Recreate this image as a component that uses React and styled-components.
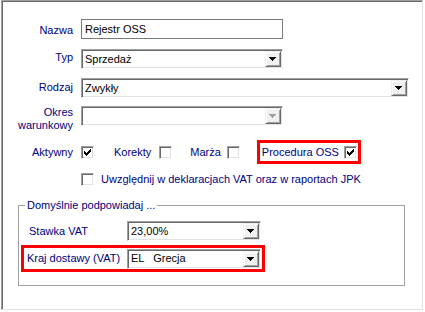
import React from "react";
import styled, { createGlobalStyle } from "styled-components";

const Global = createGlobalStyle`
  body {
    margin: 0;
    background: #fff;
    font-family: "Liberation Sans", Arial, sans-serif;
    font-size: 11px;
  }
`;

const Panel = styled.div`
  margin-left: 1px;
  width: 422px;
  height: 310px;
  box-sizing: border-box;
  background: #fff;
  border-top: 1px solid #a0a0a0;
  border-left: 1px solid #a0a0a0;
  border-right: 1px solid #e3e3e3;
  border-bottom: 1px solid #e3e3e3;
  box-shadow: inset 1px 1px 0 #696969;
  padding: 1px 0 0 1px;
`;

const Row = styled.div`
  display: flex;
  align-items: ${(p) => p.$align || "flex-start"};
  gap: ${(p) => (p.$gap ?? 8)}px;
  margin-top: ${(p) => p.$mt || 0}px;
  height: ${(p) => (p.$h ? `${p.$h}px` : "auto")};
  margin-left: ${(p) => p.$ml || 0}px;
`;

const Label = styled.div`
  width: ${(p) => p.$w || 70}px;
  flex: none;
  text-align: ${(p) => (p.$left ? "left" : "right")};
  color: #000080;
  line-height: 13px;
  padding-top: ${(p) => p.$dy || 0}px;
`;

const Text = styled.span`
  color: #000080;
  line-height: 13px;
  margin-left: ${(p) => p.$ml || 0}px;
  white-space: nowrap;
`;

const TextField = styled.div`
  width: ${(p) => p.$w}px;
  height: 20px;
  box-sizing: border-box;
  border: 1px solid #7a7a7a;
  background: #fff;
  display: flex;
  align-items: center;
  padding-left: 3px;
  color: #000;
  line-height: 13px;
`;

const ComboBox = styled.div`
  width: ${(p) => p.$w}px;
  height: 20px;
  box-sizing: border-box;
  background: #fff;
  border: 1px solid;
  border-color: #a0a0a0 #fff #fff #a0a0a0;
  box-shadow: inset 1px 1px 0 #696969, inset -1px -1px 0 #e3e3e3;
  padding: 1px;
  display: flex;
  align-items: center;
`;

const Value = styled.span`
  flex: 1;
  padding-left: 2px;
  color: #000;
  line-height: 13px;
  white-space: pre;
`;

const DropButton = styled.div`
  width: 16px;
  height: 16px;
  box-sizing: border-box;
  background: #f0f0f0;
  border: 1px solid;
  border-color: #f0f0f0 #696969 #696969 #f0f0f0;
  box-shadow: inset 1px 1px 0 #fff, inset -1px -1px 0 #a0a0a0;
  display: flex;
  align-items: center;
  justify-content: center;
  padding-right: 1px;
`;

const CheckBox = styled.div`
  width: 13px;
  height: 13px;
  flex: none;
  box-sizing: border-box;
  background: #fff;
  border: 1px solid;
  border-color: #a0a0a0 #fff #fff #a0a0a0;
  box-shadow: inset 1px 1px 0 #696969, inset -1px -1px 0 #e3e3e3;
  position: relative;
  margin-left: ${(p) => p.$ml || 0}px;
  svg {
    position: absolute;
    left: -1px;
    top: -1px;
  }
`;

const Highlight = styled.div`
  display: flex;
  align-items: center;
  flex: none;
  box-sizing: border-box;
  border: 3px solid #ff0000;
  height: ${(p) => p.$h}px;
  width: ${(p) => p.$w}px;
  padding: ${(p) => p.$pad || "0 0 0 2px"};
  margin-left: ${(p) => p.$ml || 0}px;
  gap: ${(p) => p.$gap || 0}px;
`;

const Group = styled.fieldset`
  margin: 13px 0 0 15px;
  width: 387px;
  box-sizing: border-box;
  border: 1px solid #a0a0a0;
  padding: 0 0 13px 0;
  min-width: 0;
`;

const Legend = styled.legend`
  margin-left: 6px;
  padding: 0 2px;
  color: #000080;
  line-height: 13px;
`;

const Arrow = ({ disabled }) => (
  <svg width="7" height="4" viewBox="0 0 7 4">
    <path
      d="M0 0h7v1h-1v1h-1v1h-1v1h-1v-1h-1v-1h-1v-1h-1z"
      fill={disabled ? "#a0a0a0" : "#000"}
    />
  </svg>
);

const Check = () => (
  <svg width="13" height="13" viewBox="0 0 13 13">
    <path
      d="M3 5h1v3h-1z M4 6h1v3h-1z M5 7h1v3h-1z M6 6h1v3h-1z M7 5h1v3h-1z M8 4h1v3h-1z M9 3h1v3h-1z"
      fill="#000"
    />
  </svg>
);

const Combo = ({ w, value, disabled }) => (
  <ComboBox $w={w}>
    <Value>{value}</Value>
    <DropButton>
      <Arrow disabled={disabled} />
    </DropButton>
  </ComboBox>
);

const Box = ({ checked, ml }) => (
  <CheckBox $ml={ml}>{checked && <Check />}</CheckBox>
);

export default function App() {
  return (
    <>
      <Global />
      <Panel>
        <Row $mt={17}>
          <Label $dy={5}>Nazwa</Label>
          <TextField $w={202}>Rejestr OSS</TextField>
        </Row>
        <Row $mt={10}>
          <Label $dy={2}>Typ</Label>
          <Combo w={202} value="Sprzedaż" />
        </Row>
        <Row $mt={9}>
          <Label $dy={3}>Rodzaj</Label>
          <Combo w={328} value="Zwykły" />
        </Row>
        <Row $mt={8}>
          <Label>
            Okres
            <br />
            warunkowy
          </Label>
          <Combo w={202} value="" disabled />
        </Row>
        <Row $mt={8} $h={24} $align="center">
          <Label>Aktywny</Label>
          <Box checked />
          <Text $ml={12}>Korekty</Text>
          <Box ml={0} />
          <Text $ml={10}>Marża</Text>
          <Box ml={-2} />
          <Highlight $w={104} $h={24} $ml={9} $gap={5}>
            <Text>Procedura OSS</Text>
            <Box checked />
          </Highlight>
        </Row>
        <Row $mt={9} $h={13} $align="center">
          <Label />
          <Box />
          <Text $ml={-1}>Uwzględnij w deklaracjach VAT oraz w raportach JPK</Text>
        </Row>
        <Group>
          <Legend>Domyślnie podpowiadaj ...</Legend>
          <Row $mt={9} $ml={10} $align="center" $gap={0}>
            <Label $w={98} $left>Stawka VAT</Label>
            <Combo w={134} value="23,00%" />
          </Row>
          <Row $mt={4} $ml={2} $align="center">
            <Highlight $w={244} $h={27} $pad="0 0 0 3px">
              <Label $w={100} $left>Kraj dostawy (VAT)</Label>
              <Combo w={134} value={"EL   Grecja"} />
            </Highlight>
          </Row>
        </Group>
      </Panel>
    </>
  );
}
